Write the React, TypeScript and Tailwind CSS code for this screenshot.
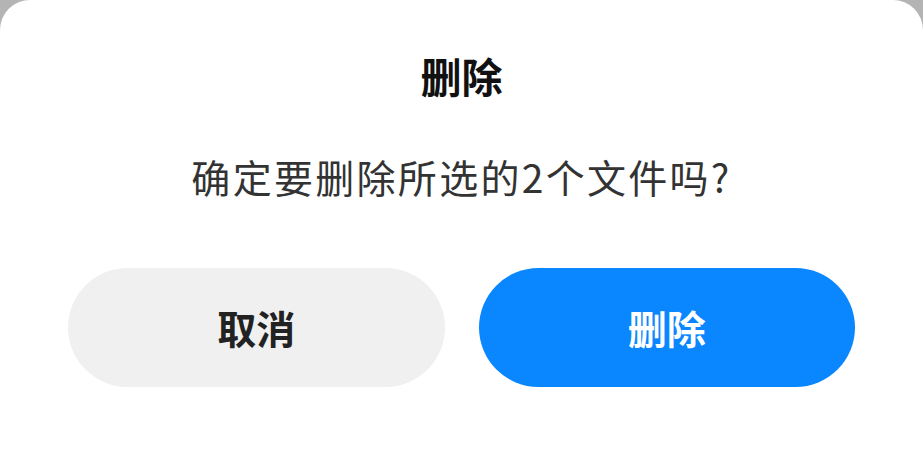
export default function App() {
  return (
    <div
      className="w-[923px] h-[456px] bg-[#b4b4b4] overflow-hidden"
      style={{ fontFamily: '"Noto Sans CJK SC", "Noto Sans", sans-serif' }}
    >
      <div className="h-full bg-white rounded-t-[30px] flex flex-col items-center">
        {/* Title */}
        <h1 className="mt-[50px] h-[50px] flex items-center text-[41px] leading-none font-bold text-[#111]">
          删除
        </h1>

        {/* Message */}
        <p className="mt-[51px] h-[50px] flex items-center text-[39px] leading-none tracking-[2.3px] text-[#333]">
          确定要删除所选的2个文件吗?
        </p>

        {/* Actions */}
        <div className="mt-[67px] w-full px-[68px] grid grid-cols-2 gap-[34px]">
          <button className="h-[119px] rounded-full bg-[#f0f0f0] text-[39px] font-bold text-[#222]">
            取消
          </button>
          <button className="h-[119px] rounded-full bg-[#0a86ff] text-[39px] font-bold text-white">
            删除
          </button>
        </div>
      </div>
    </div>
  );
}
